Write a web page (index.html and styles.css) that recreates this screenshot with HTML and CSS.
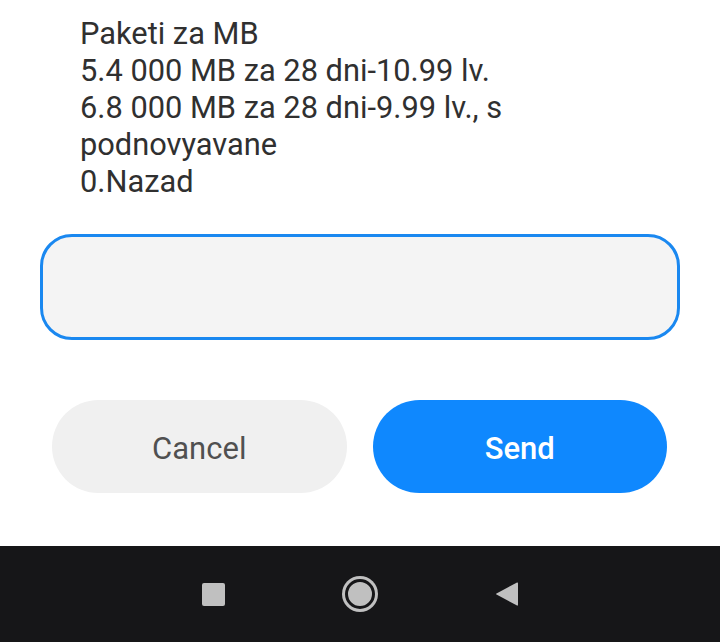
FILE: index.html
```html
<!DOCTYPE html>
<html lang="en">
<head>
    <meta charset="UTF-8">
    <meta name="viewport" content="width=device-width, initial-scale=1.0">
    <title>USSD</title>
    <link rel="stylesheet" href="styles.css">
</head>
<body>
    <div class="dialog">
        <div class="message">
            Paketi za MB<br>
            5.4 000 MB za 28 dni-10.99 lv.<br>
            6.8 000 MB za 28 dni-9.99 lv., s<br>
            podnovyavane<br>
            0.Nazad
        </div>
        <input type="text" class="reply">
        <div class="actions">
            <button class="btn btn-cancel">Cancel</button>
            <button class="btn btn-send">Send</button>
        </div>
    </div>
    <div class="navbar">
        <span class="nav-square"></span>
        <span class="nav-home"></span>
        <svg class="nav-back" width="24" height="26" viewBox="0 0 24 26">
            <path d="M22 1.5 Q23 1 23 2.5 L23 23.5 Q23 25 22 24.5 L1.5 13.5 Q0.5 13 1.5 12.5 Z" fill="#c0c0c0"/>
        </svg>
    </div>
</body>
</html>
```
FILE: styles.css
```css
body
{
    margin: 0;
    width: 720px;
    height: 642px;
    background-color: white;
    font-family: Roboto, "Liberation Sans", sans-serif;
    display: flex;
    flex-direction: column;
}

.dialog
{
    flex: 1;
    padding: 0 40px;
}

.message
{
    padding: 15px 0 0 40px;
    font-size: 30.8px;
    line-height: 37px;
    color: #303030;
}

.reply
{
    display: block;
    box-sizing: border-box;
    width: 640px;
    height: 106px;
    margin-top: 34px;
    border: 3px solid #1a88f0;
    border-radius: 32px;
    background-color: #f4f4f4;
    outline: none;
}

.actions
{
    display: flex;
    gap: 26px;
    padding: 0 13px 0 12px;
    margin-top: 60px;
}

.btn
{
    flex: 1;
    height: 93px;
    padding-top: 4px;
    border: none;
    border-radius: 47px;
    font-family: Roboto, "Liberation Sans", sans-serif;
    font-size: 31px;
}

.btn-cancel
{
    background-color: #f0f0f0;
    color: #505050;
    font-weight: 400;
}

.btn-send
{
    background-color: #0f88fe;
    color: white;
    font-weight: 500;
}

.navbar
{
    height: 96px;
    background-color: #161618;
    display: flex;
    align-items: center;
    justify-content: center;
}

.nav-square
{
    width: 23px;
    height: 23px;
    border-radius: 2px;
    background-color: #c0c0c0;
    margin-right: 120px;
}

.nav-home
{
    width: 24px;
    height: 24px;
    border-radius: 50%;
    background-color: #c0c0c0;
    border: 3px solid #161618;
    box-shadow: 0 0 0 3px #c0c0c0;
    margin-right: 120px;
}

.nav-back
{
    display: block;
}
```
